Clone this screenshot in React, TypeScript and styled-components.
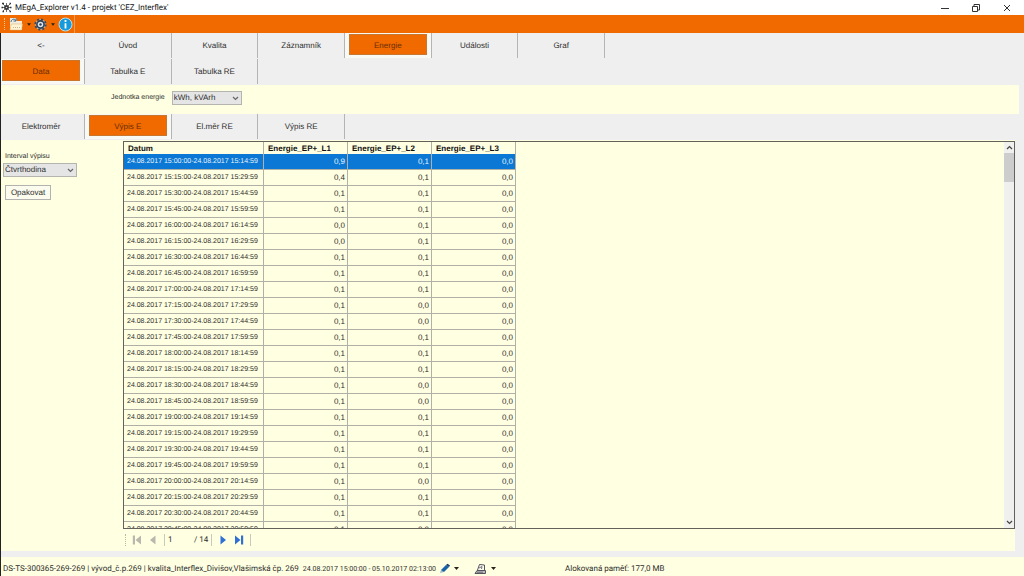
import React from "react";
import styled, { createGlobalStyle, css } from "styled-components";

const c = {
  orange: "#f06a00",
  cream: "#ffffe1",
  grey: "#efefef",
  line: "#b0b0a6",
  text: "#2e2e2e",
  blue: "#0a78d4",
};

const Global = createGlobalStyle`
  * { box-sizing: border-box; }
  body {
    margin: 0;
    background: ${c.grey};
    color: ${c.text};
    font: 8px/10px "Liberation Sans", Arial, sans-serif;
    text-rendering: geometricPrecision;
  }
  button, input, select { font: inherit; color: inherit; margin: 0; padding: 0; border-radius: 0; text-rendering: inherit; }
`;

const Window = styled.div`
  display: flex;
  flex-direction: column;
  height: 100vh;
  overflow: hidden;
`;

const TitleBar = styled.header`
  display: flex;
  align-items: center;
  flex: 0 0 15px;
  padding: 0 2px 0 1px;
  background: #fff;
`;

const Title = styled.h1`
  flex: 1;
  margin: 0;
  padding-left: 3px;
  font: 400 8px/14px Roboto, sans-serif;
  color: #111;
`;

const WindowButton = styled.button`
  display: grid;
  place-items: center;
  width: 31px;
  height: 15px;
  border: 0;
  background: none;
`;

const Toolbar = styled.div`
  display: flex;
  align-items: center;
  flex: 0 0 18px;
  gap: 2px;
  padding-left: 4px;
  background: ${c.orange};
`;

const ToolGroup = styled.div`
  display: flex;
  align-items: center;
  gap: 3px;
  height: 18px;
  padding: 0 1px 0 2px;
  border-right: 1px solid #f59a55;
`;

const IconButton = styled.button`
  display: flex;
  align-items: center;
  gap: 4px;
  border: 0;
  background: none;
`;

const Grip = styled.span<{ $light?: boolean }>`
  width: 1px;
  height: 12px;
  border-left: 1px dotted ${(p) => (p.$light ? "#ffc48f" : "#b9b9a5")};
`;

const Body = styled.div`
  display: flex;
  flex-direction: column;
  flex: 1;
  min-height: 0;
  border-left: 1px solid #222;
`;

const TabBand = styled.div`
  flex: none;
  padding-bottom: 1px;
  background: ${c.grey};
`;

const Tabs = styled.nav`
  display: grid;
  grid-template-columns: 84px repeat(6, 1fr);
  width: 604px;
  height: 25px;
`;

const TabCell = styled.div<{ $active?: boolean }>`
  padding: 1px 4px 3px;
  border-right: 1px solid #b4b4b4;
  ${(p) => p.$active && css`background: #f8f8f4;`}
  &:first-child { padding-left: 1px; }
`;

const TabButton = styled.button<{ $active?: boolean }>`
  width: 100%;
  height: 21px;
  padding-top: 2px;
  border: 0;
  background: none;
  ${(p) =>
    p.$active &&
    css`
      border: 1px solid #c9772f;
      background: ${c.orange};
      color: #6b2c00;
    `}
`;

const UnitBar = styled.div`
  display: flex;
  align-items: center;
  flex: 0 0 29px;
  gap: 7px;
  margin-right: 5px;
  padding: 0 0 3px 110px;
  background: ${c.cream};
`;

const Label = styled.label`
  font-size: 7px;
  white-space: nowrap;
`;

const SelectBox = styled.span<{ $width: number }>`
  display: grid;
  width: ${(p) => p.$width}px;
  height: 14px;
  align-items: center;
  > * { grid-area: 1 / 1; }
  > svg { justify-self: end; margin-right: 3px; pointer-events: none; }
`;

const Select = styled.select`
  width: 100%;
  height: 14px;
  padding: 0 12px 0 1px;
  border: 1px solid #b5b5b0;
  background: #e5e5e5;
  appearance: none;
  line-height: 12px;
`;

const Main = styled.main`
  display: flex;
  flex: 1;
  min-height: 0;
  margin-right: 9px;
  background: ${c.cream};
`;

const Side = styled.aside`
  display: flex;
  flex-direction: column;
  align-items: flex-start;
  flex: 0 0 122px;
  padding: 12px 0 0 2px;
`;

const SideLabel = styled(Label)`
  padding-left: 2px;
  margin-bottom: 1px;
`;

const PushButton = styled.button`
  width: 46px;
  height: 15px;
  margin: 8px 0 0 2px;
  border: 1px solid #b2b2ae;
  background: #fbfbee;
`;

const Content = styled.section`
  display: flex;
  flex-direction: column;
  flex: 1;
  min-width: 0;
  padding-top: 1px;
`;

const GridFrame = styled.div`
  display: flex;
  flex: 1;
  min-height: 0;
  border: 1px solid #62625a;
`;

const GridView = styled.div`
  flex: 1;
  min-width: 0;
  overflow: hidden;
`;

const Table = styled.table`
  width: 392px;
  table-layout: fixed;
  border-collapse: separate;
  border-spacing: 0;
`;

const Th = styled.th<{ $width: number }>`
  width: ${(p) => p.$width}px;
  height: 12px;
  padding: 2px 0 0 4px;
  border-right: 1px solid ${c.line};
  text-align: left;
  font-weight: 700;
  line-height: 10px;
  color: #111;
  white-space: nowrap;
`;

const Td = styled.td`
  height: 16px;
  padding: 1px 2px 0;
  border-right: 1px solid ${c.line};
  border-bottom: 1px solid ${c.line};
  text-align: right;
  white-space: nowrap;
`;

const DateTd = styled(Td)`
  padding-left: 3px;
  text-align: left;
  font-size: 7px;
`;

const Tr = styled.tr<{ $selected?: boolean }>`
  ${(p) => p.$selected && css`
    background: ${c.blue};
    color: #e6f2fc;
  `}
`;

const ScrollBar = styled.div`
  display: flex;
  flex-direction: column;
  flex: 0 0 10px;
  background: #f0f0ef;
`;

const ScrollButton = styled.button`
  display: grid;
  place-items: center;
  height: 11px;
  border: 0;
  background: none;
`;

const Track = styled.div`
  flex: 1;
`;

const Thumb = styled.div`
  height: 29px;
  background: #cdcdcd;
`;

const Pager = styled.div`
  display: flex;
  align-items: center;
  flex: 0 0 22px;
  gap: 6px;
  padding-left: 2px;
  font: 8px/10px Roboto, sans-serif;
`;

const PageBox = styled.label`
  display: flex;
  align-items: center;
  height: 12px;
  padding: 0 3px;
  border: solid #c9c9bb;
  border-width: 0 1px;
`;

const PagerInput = styled.input`
  width: 26px;
  height: 10px;
  border: 0;
  background: none;
`;

const Rule = styled.span`
  width: 1px;
  height: 12px;
  background: #c9c9bb;
`;

const StatusBar = styled.footer`
  display: flex;
  align-items: center;
  flex: 0 0 19px;
  margin-top: 6px;
  padding: 4px 0 0 2px;
  background: ${c.cream};
  font: 8px/12px Roboto, sans-serif;
  white-space: nowrap;
`;

const Period = styled.span`
  padding-left: 4px;
  font-size: 7px;
`;

const StatusTools = styled.div`
  display: flex;
  align-items: center;
  flex: 0 0 129px;
  gap: 15px;
  padding-left: 3px;
`;

const Chevron = ({ up = false, color = "#666" }: { up?: boolean; color?: string }) => (
  <svg width="7" height="5" viewBox="0 0 7 5" fill="none" stroke={color} strokeWidth="1.2">
    <path d={up ? "M1 4 3.5 1.5 6 4" : "M1 1 3.5 3.5 6 1"} />
  </svg>
);

const Caret = ({ width = 5 }: { width?: number }) => (
  <svg width={width} height="3" viewBox="0 0 5 3" fill="#2b2118"><path d="M0 0h5L2.5 3z" /></svg>
);

const AppIcon = () => (
  <svg width="11" height="11" viewBox="0 0 11 11" stroke="#333" fill="#333">
    <path d="M2 2l7 7M9 2 2 9M1 5.500h9M5.500 1v9" strokeWidth=".7" />
    <circle cx="5.500" cy="5.500" r="2" />
    <path d="M1 1.500h2M8.500 1.500h1.500M.5 5.500h1.500M9 5.500h1.500M1.500 9.500h1.500M8.500 9.500h1.500" strokeWidth="1.500" />
    <circle cx="5.500" cy="5.500" r=".8" fill="#ddd" stroke="none" />
  </svg>
);

const FolderIcon = () => (
  <svg width="14" height="14" viewBox="0 0 14 14">
    <path d="M1 1h6l1 3h5v9H2L1 10z" fill="#f3ead8" />
    <path d="M1 12.500 2.500 7h11l-1 6H1z" fill="#fff3d2" stroke="#d9b277" strokeWidth=".5" />
    <path d="M2 5c0-3 4-4 5-1M7 1.500V4H4.500" fill="none" stroke="#39719e" />
    <path d="M4 10.500h7" stroke="#c8b490" strokeDasharray="1 1" />
  </svg>
);

const GearIcon = () => (
  <svg width="13" height="13" viewBox="0 0 13 13">
    <circle cx="6.500" cy="6.500" r="5.200" fill="#c8b9a8" stroke="#3d4a5c" strokeWidth="1.800" strokeDasharray="2.040" />
    <circle cx="6.500" cy="6.500" r="3.600" fill="#dfe4e8" stroke="#2c415a" strokeWidth="1.600" />
    <circle cx="6.500" cy="6.500" r="1.200" fill="#2c415a" />
  </svg>
);

const InfoIcon = () => (
  <svg width="15" height="15" viewBox="0 0 15 15">
    <circle cx="7.500" cy="7.500" r="6.500" fill="#159bdc" stroke="#bfe0ee" />
    <path d="M7.500 3v2M7.500 6.200v5.300" stroke="#fff" strokeWidth="1.800" />
  </svg>
);

const PageArrow = ({ back, end, muted }: { back?: boolean; end?: boolean; muted?: boolean }) => {
  const color = muted ? "#b8b8ae" : "#2f6fd6";
  return (
    <svg width="10" height="10" viewBox="0 0 10 10" fill={color}>
      <g transform={back ? "matrix(-1 0 0 1 10 0)" : undefined}>
        <path d={end ? "M1 .5v9L6.500 5z" : "M2.500 .5v9L8 5z"} />
        {end && <path d="M7 .5h2.200v9H7z" />}
      </g>
    </svg>
  );
};

const PenIcon = () => (
  <svg width="11" height="11" viewBox="0 0 11 11">
    <path d="M1 10 2 7l3 2z" fill="#9fb4c4" />
    <path d="M2 7 7 2l3 2-5 5z" fill="#1663a8" />
    <path d="M7 2 8.500.800 11 2.500 10 4z" fill="#123e70" />
  </svg>
);

const PrinterIcon = () => (
  <svg width="13" height="12" viewBox="0 0 13 12" fill="none" stroke="#54545c">
    <path d="M3.500 7 5.500 1.500l5 .5v5" fill="#fafaf0" />
    <path d="m5 5 3-1.500L7.500 6" strokeWidth=".8" />
    <path d="M1 10.500 3 7.500h8.500v3z" fill="#bcbcc0" />
    <path d="M3 9.200h6" strokeWidth=".8" />
  </svg>
);

const TabRow = ({ items, active }: { items: string[]; active: string }) => (
  <Tabs>
    {items.map((item) => (
      <TabCell key={item} $active={item === active}>
        <TabButton $active={item === active}>{item}</TabButton>
      </TabCell>
    ))}
  </Tabs>
);

const values: [string, string][] = [
  ["0,9", "0,1"], ["0,4", "0,1"], ["0,1", "0,1"], ["0,1", "0,1"], ["0,0", "0,1"], ["0,0", "0,1"],
  ["0,1", "0,1"], ["0,1", "0,1"], ["0,1", "0,1"], ["0,1", "0,0"], ["0,1", "0,0"], ["0,1", "0,1"],
  ["0,1", "0,1"], ["0,1", "0,1"], ["0,1", "0,0"], ["0,1", "0,0"], ["0,1", "0,1"], ["0,1", "0,1"],
  ["0,1", "0,1"], ["0,1", "0,1"], ["0,1", "0,0"], ["0,1", "0,1"], ["0,1", "0,1"], ["0,1", "0,0"],
];

const interval = (index: number) => {
  const start = 15 * 60 + index * 15;
  const hour = Math.floor(start / 60);
  const minute = start % 60;
  const pad = (n: number) => String(n).padStart(2, "0");
  return `24.08.2017 ${hour}:${pad(minute)}:00-24.08.2017 ${hour}:${pad(minute + 14)}:59`;
};

export default function App() {
  return (
    <Window>
      <Global />
      <TitleBar>
        <AppIcon />
        <Title>MEgA_Explorer v1.4 - projekt 'CEZ_Interflex'</Title>
        <WindowButton aria-label="Minimize">
          <svg width="8" height="8" stroke="#333"><path d="M0 4.500h8" /></svg>
        </WindowButton>
        <WindowButton aria-label="Restore">
          <svg width="8" height="8" viewBox="0 0 8 8" fill="none" stroke="#333"><path d="M.5 2.500h5v5h-5zM2 2V.500h5.500V6H6" /></svg>
        </WindowButton>
        <WindowButton aria-label="Close">
          <svg width="8" height="8" viewBox="0 0 8 8" stroke="#333"><path d="m1 1 6 6M7 1 1 7" /></svg>
        </WindowButton>
      </TitleBar>
      <Toolbar>
        <Grip $light />
        <ToolGroup>
          <IconButton aria-label="Projekt"><FolderIcon /><Caret width={4} /></IconButton>
          <IconButton aria-label="Nastavení"><GearIcon /><Caret width={4} /></IconButton>
          <IconButton aria-label="Informace"><InfoIcon /></IconButton>
        </ToolGroup>
      </Toolbar>
      <Body>
        <TabBand>
          <TabRow items={["<-", "Úvod", "Kvalita", "Záznamník", "Energie", "Události", "Graf"]} active="Energie" />
        </TabBand>
        <TabBand>
          <TabRow items={["Data", "Tabulka E", "Tabulka RE"]} active="Data" />
        </TabBand>
        <UnitBar>
          <Label htmlFor="unit">Jednotka energie</Label>
          <SelectBox $width={70}>
            <Select id="unit"><option>kWh, kVArh</option></Select>
            <Chevron />
          </SelectBox>
        </UnitBar>
        <TabBand>
          <TabRow items={["Elektroměr", "Výpis E", "El.měr RE", "Výpis RE"]} active="Výpis E" />
        </TabBand>
        <Main>
          <Side>
            <SideLabel htmlFor="interval">Interval výpisu</SideLabel>
            <SelectBox $width={74}>
              <Select id="interval"><option>Čtvrthodina</option></Select>
              <Chevron />
            </SelectBox>
            <PushButton>Opakovat</PushButton>
          </Side>
          <Content>
            <GridFrame>
              <GridView>
                <Table>
                  <thead>
                    <tr>
                      <Th $width={140}>Datum</Th>
                      <Th $width={84}>Energie_EP+_L1</Th>
                      <Th $width={84}>Energie_EP+_L2</Th>
                      <Th $width={84}>Energie_EP+_L3</Th>
                    </tr>
                  </thead>
                  <tbody>
                    {values.map(([l1, l2], i) => (
                      <Tr key={i} $selected={i === 0}>
                        <DateTd>{interval(i)}</DateTd>
                        <Td>{l1}</Td>
                        <Td>{l2}</Td>
                        <Td>0,0</Td>
                      </Tr>
                    ))}
                  </tbody>
                </Table>
              </GridView>
              <ScrollBar>
                <ScrollButton aria-label="Nahoru"><Chevron up color="#444" /></ScrollButton>
                <Track><Thumb /></Track>
                <ScrollButton aria-label="Dolů"><Chevron color="#444" /></ScrollButton>
              </ScrollBar>
            </GridFrame>
            <Pager>
              <Grip />
              <IconButton aria-label="První"><PageArrow back end muted /></IconButton>
              <IconButton aria-label="Předchozí"><PageArrow back muted /></IconButton>
              <PageBox>
                <PagerInput aria-label="Strana" defaultValue="1" />
                / 14
              </PageBox>
              <IconButton aria-label="Další"><PageArrow /></IconButton>
              <IconButton aria-label="Poslední"><PageArrow end /></IconButton>
              <Rule />
            </Pager>
          </Content>
        </Main>
        <StatusBar>
          <span>DS-TS-300365-269-269 | vývod_č.p.269 | kvalita_Interflex_Divišov,Vlašimská čp. 269</span>
          <Period>24.08.2017 15:00:00 - 05.10.2017 02:13:00</Period>
          <StatusTools>
            <IconButton aria-label="Upravit"><PenIcon /><Caret /></IconButton>
            <IconButton aria-label="Tisk"><PrinterIcon /><Caret /></IconButton>
          </StatusTools>
          <span>Alokovaná paměť: 177,0 MB</span>
        </StatusBar>
      </Body>
    </Window>
  );
}
